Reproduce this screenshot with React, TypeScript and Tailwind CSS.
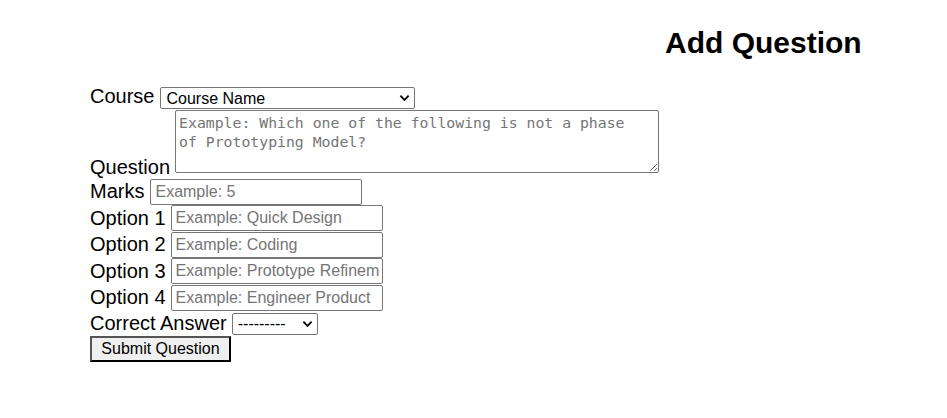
import React from "react";

const labelCls = "text-[20px] leading-[23px] text-black whitespace-nowrap";
const inputCls =
  "h-[26px] w-[212px] border border-[#767676] rounded-[2px] pl-[4px] pr-[2px] text-[16px] text-black placeholder:text-[#757575] bg-white outline-none";

function Chevron() {
  return (
    <svg
      viewBox="0 0 12 8"
      className="absolute right-[5px] top-1/2 -translate-y-1/2 w-[11px] h-[8px] pointer-events-none"
    >
      <path d="M1.5 1.5 L6 6 L10.5 1.5" fill="none" stroke="#000" strokeWidth="2" />
    </svg>
  );
}

const options = [
  { label: "Option 1", placeholder: "Example: Quick Design" },
  { label: "Option 2", placeholder: "Example: Coding" },
  { label: "Option 3", placeholder: "Example: Prototype Refinement" },
  { label: "Option 4", placeholder: "Example: Engineer Product" },
];

export default function App() {
  return (
    <div className="min-h-screen bg-white font-['Liberation_Sans',Arial,sans-serif] text-black">
      <h1 className="pt-[26px] pl-[665px] text-[30px] leading-[34px] font-bold">Add Question</h1>

      <form className="pl-[90px] pt-[24px]">
        {/* COURSE */}
        <div className="flex items-start">
          <label className={labelCls + " mt-[1px]"}>Course</label>
          <div className="relative ml-[6px] mt-[3px]">
            <select className="block appearance-none h-[22px] w-[255px] border border-[#767676] rounded-[2px] pl-[5px] pt-[1px] text-[16px] leading-[18px] bg-white text-black outline-none">
              <option>Course Name</option>
            </select>
            <Chevron />
          </div>
        </div>

        {/* QUESTION */}
        <div className="flex items-end">
          <label className={labelCls + " mb-[-6px]"}>Question</label>
          <textarea
            className="block ml-[5px] mt-[1px] h-[63px] w-[484px] border border-[#767676] rounded-[2px] px-[3px] py-[2px] text-[14.8px] leading-[19px] font-['DejaVu_Sans_Mono',monospace] text-black placeholder:text-[#757575] bg-white outline-none"
            placeholder={"Example: Which one of the following is not a phase\nof Prototyping Model?"}
          />
        </div>

        {/* MARKS */}
        <div className="flex items-center h-[27px] mt-[5px]">
          <label className={labelCls}>Marks</label>
          <input type="text" className={inputCls + " ml-[6px] h-[25px]"} placeholder="Example: 5" />
        </div>

        {/* OPTIONS */}
        {options.map((o) => (
          <div key={o.label} className="flex items-center h-[26.5px]">
            <label className={labelCls}>{o.label}</label>
            <input type="text" className={inputCls + " ml-[5px]"} placeholder={o.placeholder} />
          </div>
        ))}

        {/* CORRECT ANSWER */}
        <div className="flex items-center h-[25px]">
          <label className={labelCls}>Correct Answer</label>
          <div className="relative ml-[5px]">
            <select className="block appearance-none h-[22px] w-[86px] border border-[#767676] rounded-[2px] pl-[5px] text-[16px] leading-[18px] bg-white text-black outline-none">
              <option>---------</option>
            </select>
            <Chevron />
          </div>
        </div>

        <button
          type="submit"
          className="block h-[26px] w-[141px] border-2 border-black border-t-[#555] border-l-[#555] bg-[#efefef] text-[16px] leading-[18px] text-black"
        >
          Submit Question
        </button>
      </form>
    </div>
  );
}
